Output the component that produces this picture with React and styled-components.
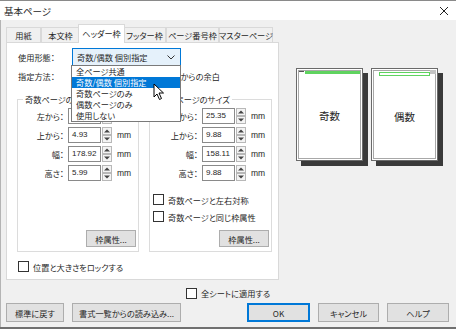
import React from 'react';
import styled, { createGlobalStyle } from 'styled-components';

const Global = createGlobalStyle`
  html, body { margin: 0; padding: 0; width: 456px; height: 329px; overflow: hidden; background: #f0f0f0; }
  body {
    font-family: "Noto Sans CJK JP", "Noto Sans", sans-serif;
    font-size: 8.2px;
    color: #262626;
    font-feature-settings: "palt";
  }
  * { box-sizing: border-box; }
`;

const Window = styled.div`
  position: relative;
  width: 456px;
  height: 329px;
  display: flex;
  flex-direction: column;
  background: #f0f0f0;
  border-top: 1px solid #8a8a8a;
  border-bottom: 2px solid #707070;
`;

const TitleBar = styled.div`
  height: 19px;
  background: #fff;
  display: flex;
  align-items: center;
  justify-content: space-between;
  padding: 0 4px 0 4px;
  font-size: 9.5px;
  flex-shrink: 0;
`;

const Body = styled.div`
  flex: 1;
  display: flex;
  flex-direction: column;
  padding: 4px 0 0 5px;
  border-left: 1px solid #b4b4b4;
`;

const MainRow = styled.div`
  display: flex;
`;

const LeftCol = styled.div`
  width: 273px;
  display: flex;
  flex-direction: column;
`;

const TabStrip = styled.div`
  height: 18px;
  display: flex;
  align-items: flex-end;
`;

const Tab = styled.div`
  width: ${p => (p.$active ? p.$w + 4 : p.$w)}px;
  height: ${p => (p.$active ? 19 : 15)}px;
  margin: ${p => (p.$active ? '0 -2px -1px -2px' : '0')};
  background: ${p => (p.$active ? '#fff' : '#f0f0f0')};
  border: 1px solid #d9d9d9;
  border-bottom: none;
  position: relative;
  z-index: ${p => (p.$active ? 2 : 1)};
  display: flex;
  align-items: center;
  justify-content: center;
  padding-bottom: ${p => (p.$active ? 2 : 0)}px;
  white-space: nowrap;
  line-height: 1;
`;

const Panel = styled.div`
  width: 273px;
  height: 238px;
  background: #fff;
  border: 1px solid #d9d9d9;
  padding: 5px 0 0 10px;
  display: flex;
  flex-direction: column;
`;

const FormRow = styled.div`
  display: flex;
  align-items: center;
  height: ${p => p.$h}px;
  margin-top: ${p => p.$mt || 0}px;
`;

const RowLabel = styled.div`
  width: 55px;
  padding-left: 1px;
  white-space: nowrap;
`;

const SelectBox = styled.div`
  position: relative;
  width: 109px;
  height: 18px;
  border: 1px solid #0078d7;
  background: #e5f1fb;
  display: flex;
  align-items: center;
  justify-content: space-between;
  padding: 0 5px 0 4px;
  white-space: nowrap;
`;

const DropList = styled.div`
  position: absolute;
  top: 16px;
  left: -2px;
  width: 110px;
  background: #fff;
  border: 1px solid #7a7a7a;
  z-index: 10;
  display: flex;
  flex-direction: column;
`;

const DropItem = styled.div`
  height: 11px;
  line-height: 11px;
  padding-left: 4px;
  background: ${p => (p.$sel ? '#0078d7' : '#fff')};
  color: ${p => (p.$sel ? '#fff' : '#262626')};
  white-space: nowrap;
  overflow: hidden;
`;

const RadioWrap = styled.div`
  display: flex;
  align-items: center;
  gap: 3px;
  margin-left: 71px;
  white-space: nowrap;
`;

const Radio = styled.span`
  width: 10px;
  height: 10px;
  border-radius: 50%;
  border: 1px solid #333;
  background: #fff;
`;

const GroupsRow = styled.div`
  display: flex;
  gap: 10px;
  margin-top: 9px;
  height: 159px;
`;

const Group = styled.fieldset`
  margin: 0;
  width: ${p => p.$w}px;
  height: 159px;
  border: 1px solid #dcdcdc;
  padding: 3px 2px 4px ${p => p.$pl}px;
  display: flex;
  flex-direction: column;
  min-width: 0;
`;

const Legend = styled.legend`
  padding: 0 2px;
  line-height: 12px;
  white-space: nowrap;
`;

const Fields = styled.div`
  display: flex;
  flex-direction: column;
  gap: 3px;
`;

const FieldRow = styled.div`
  display: flex;
  align-items: center;
  height: 16px;
`;

const FieldLabel = styled.div`
  width: 41px;
  text-align: right;
  margin-right: 4px;
  white-space: nowrap;
`;

const NumInput = styled.div`
  width: 33px;
  height: 16px;
  border: 1px solid #8a8a8a;
  background: #fff;
  padding-left: 3px;
  line-height: 14px;
  font-family: "Liberation Sans", "Noto Sans", sans-serif;
  font-size: 8px;
`;

const Spin = styled.div`
  width: 10px;
  height: 16px;
  margin-left: 1px;
  display: flex;
  flex-direction: column;
`;

const SpinHalf = styled.div`
  flex: 1;
  border: 1px solid #b8b8b8;
  background: #f4f4f4;
  display: flex;
  align-items: center;
  justify-content: center;
`;

const Unit = styled.span`
  margin-left: 5px;
  font-family: "Liberation Sans", "Noto Sans", sans-serif;
  font-size: 8.5px;
`;

const CheckRow = styled.div`
  display: flex;
  align-items: center;
  gap: 4px;
  height: 13px;
  margin-top: ${p => p.$mt || 0}px;
  margin-left: ${p => p.$ml || 0}px;
  white-space: nowrap;
`;

const Check = styled.span`
  width: 11px;
  height: 11px;
  border: 1px solid #333;
  background: #fff;
  flex-shrink: 0;
`;

const Button = styled.div`
  width: ${p => p.$w}px;
  height: ${p => p.$h || 19}px;
  background: #e1e1e1;
  border: 1px solid ${p => (p.$default ? '#0078d7' : '#adadad')};
  box-shadow: ${p => (p.$default ? 'inset 0 0 0 1px #0078d7' : 'none')};
  display: flex;
  align-items: center;
  justify-content: center;
  white-space: nowrap;
  flex-shrink: 0;
`;

const GroupButton = styled(Button)`
  margin-top: auto;
  align-self: flex-end;
`;

const Preview = styled.div`
  display: flex;
  gap: 8px;
  margin: 44px 0 0 17px;
  align-self: flex-start;
`;

const Page = styled.div`
  position: relative;
  width: 67px;
  height: 93px;
  background: #fff;
  border: 1px solid #6a6a6a;
  box-shadow: inset 0 0 0 1px #fff, inset 0 0 0 2px #a8a8a8, 5px 5px 0 #3a3a3a;
  display: flex;
  flex-direction: column;
`;

const PageHead = styled.div`
  display: flex;
  align-items: flex-start;
  padding: ${p => p.$pad};
  gap: 1px;
`;

const Tick = styled.span`
  width: 5px;
  height: 1px;
  background: #555;
`;

const GreenBar = styled.span`
  flex: 1;
  height: 3px;
  background: #5fd35f;
`;

const GreenBox = styled.span`
  flex: 1;
  height: 4px;
  border: 1px solid #5fd35f;
`;

const Corner = styled.span`
  position: absolute;
  top: 1px;
  right: 1px;
  width: 6px;
  height: 4px;
  background: #c4c4c4;
`;

const PageLabel = styled.div`
  flex: 1;
  display: flex;
  align-items: center;
  justify-content: center;
  font-size: 10.5px;
  padding-bottom: 4px;
`;

const ApplyRow = styled.div`
  display: flex;
  align-items: center;
  gap: 4px;
  height: 14px;
  margin-top: 6px;
  padding-left: 180px;
  white-space: nowrap;
`;

const ButtonRow = styled.div`
  display: flex;
  margin-top: 3px;
  padding-right: 7px;
`;

const BtnGroup = styled.div`
  display: flex;
  gap: 8px;
  margin-left: ${p => (p.$right ? 'auto' : '0')};
`;

const Cursor = styled.svg`
  position: absolute;
  left: 153px;
  top: 82px;
  z-index: 20;
`;

const Up = () => (
  <svg width="6" height="4" viewBox="0 0 6 4"><path d="M0 3.5 L3 0.5 L6 3.5 Z" fill="#444" /></svg>
);
const Down = () => (
  <svg width="6" height="4" viewBox="0 0 6 4"><path d="M0 0.5 L3 3.5 L6 0.5 Z" fill="#444" /></svg>
);

const NumField = ({ label, value }) => (
  <FieldRow>
    <FieldLabel>{label}</FieldLabel>
    <NumInput>{value}</NumInput>
    <Spin>
      <SpinHalf><Up /></SpinHalf>
      <SpinHalf><Down /></SpinHalf>
    </Spin>
    <Unit>mm</Unit>
  </FieldRow>
);

const tabs = [
  { t: '用紙', w: 35 },
  { t: '本文枠', w: 39 },
  { t: 'ヘッダー枠', w: 43, active: true },
  { t: 'フッター枠', w: 43 },
  { t: 'ページ番号枠', w: 53 },
  { t: 'マスターページ', w: 54 },
];

const options = ['全ページ共通', '奇数/偶数 個別指定', '奇数ページのみ', '偶数ページのみ', '使用しない'];

export default function App() {
  return (
    <>
      <Global />
      <Window>
        <TitleBar>
          <span>基本ページ</span>
          <svg width="10" height="10" viewBox="0 0 10 10" style={{ marginRight: 3 }}>
            <path d="M1 1 L9 9 M9 1 L1 9" stroke="#222" strokeWidth="1" />
          </svg>
        </TitleBar>
        <Body>
          <MainRow>
            <LeftCol>
              <TabStrip>
                {tabs.map(tab => (
                  <Tab key={tab.t} $w={tab.w} $active={tab.active}>{tab.t}</Tab>
                ))}
              </TabStrip>
              <Panel>
                <FormRow $h={18}>
                  <RowLabel>使用形態：</RowLabel>
                  <SelectBox>
                    <span>奇数/偶数 個別指定</span>
                    <svg width="8" height="5" viewBox="0 0 8 5">
                      <path d="M0.5 0.5 L4 4 L7.5 0.5" stroke="#333" strokeWidth="1" fill="none" />
                    </svg>
                    <DropList>
                      {options.map((o, i) => (
                        <DropItem key={o} $sel={i === 1}>{o}</DropItem>
                      ))}
                    </DropList>
                  </SelectBox>
                </FormRow>
                <FormRow $h={16} $mt={2}>
                  <RowLabel>指定方法：</RowLabel>
                  <RadioWrap>
                    <Radio />
                    <span>用紙端からの余白</span>
                  </RadioWrap>
                </FormRow>
                <GroupsRow>
                  <Group $w={122} $pl={5}>
                    <Legend>奇数ページのサイズ</Legend>
                    <Fields>
                      <NumField label="左から：" value="25.35" />
                      <NumField label="上から：" value="4.93" />
                      <NumField label="幅：" value="178.92" />
                      <NumField label="高さ：" value="5.99" />
                    </Fields>
                    <GroupButton $w={50} $h={17}>枠属性...</GroupButton>
                  </Group>
                  <Group $w={123} $pl={7}>
                    <Legend>偶数ページのサイズ</Legend>
                    <Fields>
                      <NumField label="左から：" value="25.35" />
                      <NumField label="上から：" value="9.88" />
                      <NumField label="幅：" value="158.11" />
                      <NumField label="高さ：" value="9.88" />
                    </Fields>
                    <CheckRow $mt={12} $ml={-4}>
                      <Check />
                      <span>奇数ページと左右対称</span>
                    </CheckRow>
                    <CheckRow $mt={4} $ml={-4}>
                      <Check />
                      <span>奇数ページと同じ枠属性</span>
                    </CheckRow>
                    <GroupButton $w={50} $h={17}>枠属性...</GroupButton>
                  </Group>
                </GroupsRow>
                <CheckRow $mt={8} $ml={1}>
                  <Check />
                  <span>位置と大きさをロックする</span>
                </CheckRow>
              </Panel>
            </LeftCol>
            <Preview>
              <Page>
                <PageHead $pad="2px 2px 0 2px">
                  <Tick />
                  <GreenBar />
                </PageHead>
                <PageLabel>奇数</PageLabel>
              </Page>
              <Page>
                <Corner />
                <PageHead $pad="3px 7px 0 7px">
                  <GreenBox />
                </PageHead>
                <PageLabel>偶数</PageLabel>
              </Page>
            </Preview>
          </MainRow>
          <ApplyRow>
            <Check />
            <span>全シートに適用する</span>
          </ApplyRow>
          <ButtonRow>
            <BtnGroup>
              <Button $w={58}>標準に戻す</Button>
              <Button $w={109}>書式一覧からの読み込み...</Button>
            </BtnGroup>
            <BtnGroup $right>
              <Button $w={63} $default>OK</Button>
              <Button $w={61}>キャンセル</Button>
              <Button $w={62}>ヘルプ</Button>
            </BtnGroup>
          </ButtonRow>
        </Body>
        <Cursor width="12" height="18" viewBox="0 0 12 18">
          <path d="M1 1 L1 14 L4 11 L6.5 16.5 L8.5 15.5 L6 10 L10.5 10 Z" fill="#fff" stroke="#000" strokeWidth="1" strokeLinejoin="round" />
        </Cursor>
      </Window>
    </>
  );
}
